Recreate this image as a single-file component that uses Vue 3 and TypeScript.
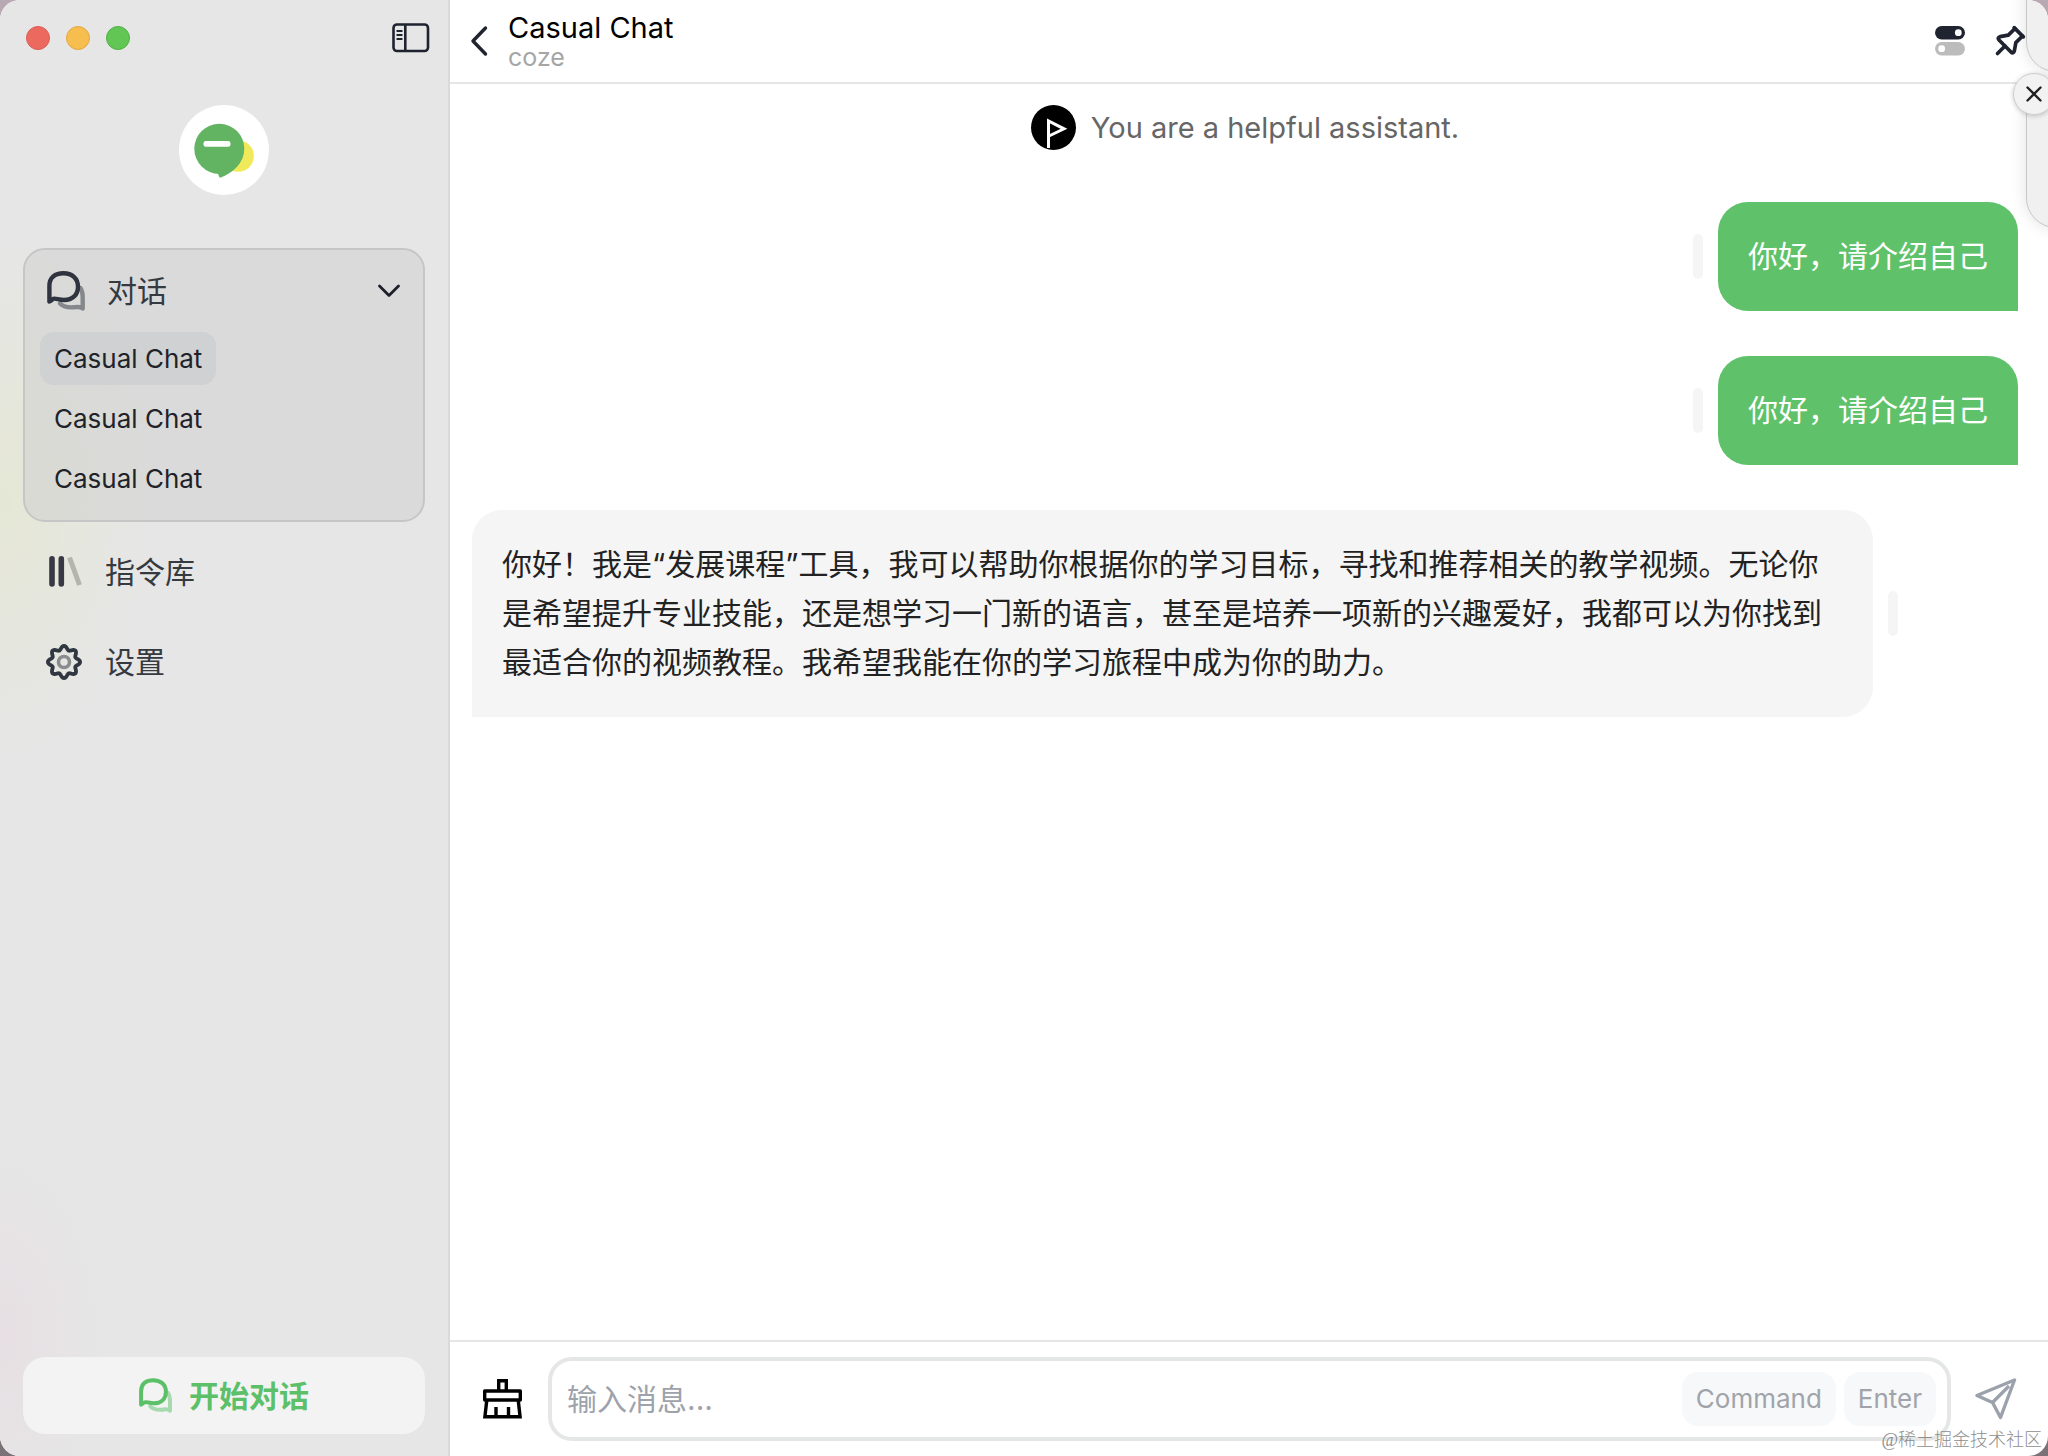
<script setup lang="ts">
import { ref } from 'vue'

interface Message {
  id: number
  from: 'user' | 'bot'
  text: string
}

const chats = ref<string[]>(['Casual Chat', 'Casual Chat', 'Casual Chat'])
const activeChat = ref<number>(0)
const draft = ref<string>('')

const messages: Message[] = [
  { id: 1, from: 'user', text: '你好，请介绍自己' },
  { id: 2, from: 'user', text: '你好，请介绍自己' },
  {
    id: 3,
    from: 'bot',
    text: '你好！我是“发展课程”工具，我可以帮助你根据你的学习目标，寻找和推荐相关的教学视频。无论你是希望提升专业技能，还是想学习一门新的语言，甚至是培养一项新的兴趣爱好，我都可以为你找到最适合你的视频教程。我希望我能在你的学习旅程中成为你的助力。',
  },
]

// Outline of the settings gear: a circle with eight soft lobes
const gearPoints: string = Array.from({ length: 144 }, (_, i) => {
  const a = (i / 144) * Math.PI * 2
  const r = 14.2 + 1.9 * Math.cos(8 * a)
  return `${(19 + r * Math.sin(a)).toFixed(2)},${(19 - r * Math.cos(a)).toFixed(2)}`
}).join(' ')
</script>

<template>
  <div class="desktop">
    <div class="window">
      <aside class="sidebar">
        <div class="titlebar">
          <div class="lights">
            <button class="light red" aria-label="Close"></button>
            <button class="light yellow" aria-label="Minimize"></button>
            <button class="light green" aria-label="Zoom"></button>
          </div>
          <button class="plain" aria-label="Toggle sidebar">
            <svg width="38" height="30" viewBox="0 0 38 30" fill="none" stroke="#1f2330" stroke-width="2.6">
              <rect x="1.5" y="1.5" width="34.5" height="26.5" rx="3.5" />
              <path d="M13.3 1.5V28" />
              <path d="M5.2 8h4.6M5.2 12h4.6M5.2 16h4.6" stroke-width="1.8" stroke-linecap="round" />
            </svg>
          </button>
        </div>

        <div class="logo">
          <svg width="90" height="90" viewBox="0 0 90 90">
            <circle cx="59" cy="51" r="15.8" fill="#f0ea5a" />
            <circle cx="40.3" cy="43.8" r="25" fill="#62b462" />
            <path d="M36 68C39 68.3 39.5 69 39.8 71Q40.3 73.5 43 72C52 68 61 62 64 50L45 48Z" fill="#62b462" />
            <rect x="24.5" y="36" width="27" height="5.8" rx="2.4" fill="#fff" />
          </svg>
        </div>

        <nav class="nav">
          <section class="group">
            <button class="group-head">
              <svg width="38" height="40" viewBox="0 0 38 40" fill="none" stroke="#303440" stroke-width="4.4" stroke-linejoin="round" stroke-linecap="round">
                <path d="M33.4 17C35.4 20 35.7 23 35.7 27V37.5C33 35 30 36 27 36.3C21 36.8 16 35.5 13 32.5" opacity=".5" />
                <path d="M2.4 30.5V15C2.4 6.5 8 2.3 16.5 2.3S31 7.5 31 15.7S25.5 29 17 29C12 29 8.5 27 6.5 27.8C4.5 28.6 4 30 2.4 30.5Z" />
              </svg>
              <span class="nav-text">对话</span>
              <svg class="chevron" width="24" height="16" viewBox="0 0 24 16" fill="none" stroke="#1c2029" stroke-width="2.8" stroke-linecap="round" stroke-linejoin="round">
                <path d="M2.5 3L12 12.5L21.5 3" />
              </svg>
            </button>
            <ul class="chats">
              <li v-for="(name, i) in chats" :key="i">
                <button class="chat" :class="{ active: i === activeChat }" @click="activeChat = i">{{ name }}</button>
              </li>
            </ul>
          </section>
          <button class="nav-item">
            <svg width="38" height="38" viewBox="0 0 38 38" fill="none" stroke-linecap="round" stroke-width="5.6">
              <path d="M7 5.8V31M16.3 5.8V31" stroke="#393946" />
              <path d="M24.5 4.500L34.500 32" stroke="#b3b5ae" stroke-width="5" stroke-linecap="butt" />
            </svg>
            <span class="nav-text">指令库</span>
          </button>
          <button class="nav-item">
            <svg width="38" height="38" viewBox="0 0 38 38" fill="none">
              <polygon :points="gearPoints" stroke="#303741" stroke-width="3.8" stroke-linejoin="round" />
              <circle cx="19" cy="19" r="5.5" stroke="#8b8c8f" stroke-width="3.6" />
            </svg>
            <span class="nav-text">设置</span>
          </button>
        </nav>

        <button class="start">
          <svg width="33" height="35" viewBox="0 0 38 40" fill="none" stroke="#5cc069" stroke-width="4.6" stroke-linejoin="round" stroke-linecap="round">
            <path d="M33.4 17C35.4 20 35.7 23 35.7 27V37.5C33 35 30 36 27 36.3C21 36.8 16 35.5 13 32.5" opacity=".5" />
            <path d="M2.4 30.5V15C2.4 6.5 8 2.3 16.5 2.3S31 7.5 31 15.7S25.5 29 17 29C12 29 8.5 27 6.5 27.8C4.5 28.6 4 30 2.4 30.5Z" />
          </svg>
          <span>开始对话</span>
        </button>
      </aside>

      <main class="main">
        <header class="header">
          <button class="plain" aria-label="Back">
            <svg width="20" height="32" viewBox="0 0 20 32" fill="none" stroke="#20242f" stroke-width="3.4" stroke-linecap="round" stroke-linejoin="round">
              <path d="M16.5 3L4 16L16.5 29" />
            </svg>
          </button>
          <div class="heading">
            <h1>Casual Chat</h1>
            <p>coze</p>
          </div>
          <div class="actions">
            <button class="plain" aria-label="Options">
              <svg width="30" height="30" viewBox="0 0 30 30">
                <rect width="30" height="13.4" rx="6.7" fill="#1f2430" />
                <circle cx="23.3" cy="6.7" r="3.4" fill="#fff" />
                <rect y="16" width="30" height="13.4" rx="6.7" fill="#bcbcbc" />
                <circle cx="6.7" cy="22.7" r="3.4" fill="#fff" />
              </svg>
            </button>
            <button class="plain" aria-label="Pin">
              <svg width="40" height="40" viewBox="0 0 24 24" fill="none" stroke="#1f2430" stroke-width="2.2" stroke-linecap="round" stroke-linejoin="round">
                <path d="M15 4.5L11 8.5L6 9.4Q4.2 10 5.4 11.4L12.6 18.6Q14 19.8 14.6 18L15.5 13L19.5 9" />
                <path d="M9 15L4.5 19.5M14.5 4L20 9.5" />
              </svg>
            </button>
          </div>
        </header>

        <section class="conversation">
          <div class="system">
            <svg width="45" height="45" viewBox="0 0 45 45">
              <circle cx="22.5" cy="22.5" r="22.5" fill="#000" />
              <path d="M17.5 43V16L33 23.8L18 31" fill="none" stroke="#fff" stroke-width="3" />
            </svg>
            <span>You are a helpful assistant.</span>
          </div>
          <div v-for="m in messages" :key="m.id" class="row" :class="m.from">
            <p class="bubble">{{ m.text }}</p>
            <span class="handle"></span>
          </div>
        </section>

        <footer class="composer">
          <button class="plain" aria-label="Clear context">
            <svg width="39" height="40" viewBox="0 0 39 40" fill="none" stroke="#000" stroke-width="3.4">
              <path d="M15.7 12V1.7H23.3V12" />
              <path d="M1.7 12H37.3V21H1.7Z" stroke-linejoin="round" />
              <path d="M3.8 21L1.9 37.8H37.1L35.2 21" />
              <path d="M13 28V37M25.5 28V37" />
            </svg>
          </button>
          <div class="field">
            <input v-model="draft" type="text" placeholder="输入消息..." aria-label="输入消息" />
            <kbd>Command</kbd>
            <kbd>Enter</kbd>
          </div>
          <button class="plain" aria-label="Send">
            <svg width="42" height="42" viewBox="0 0 42 42" fill="none" stroke="#9ca2ab" stroke-width="3.4" stroke-linejoin="round">
              <path d="M39.5 2L2 17.5L17.5 24.5L25.5 39.5Z" />
              <path d="M17.5 24.5L34 8" />
            </svg>
          </button>
        </footer>
      </main>

      <div class="notice first"></div>
      <div class="notice second"></div>
      <button class="dismiss" aria-label="Dismiss">
        <svg width="16" height="16" viewBox="0 0 16 16" stroke="#222" stroke-width="2.4" stroke-linecap="round">
          <path d="M1.5 1.5L14.5 14.5M14.5 1.5L1.5 14.5" />
        </svg>
      </button>
      <span class="credit">@稀土掘金技术社区</span>
    </div>
  </div>
</template>

<style>
body {
  margin: 0;
}
</style>

<style scoped>
.desktop {
  background: linear-gradient(#b8a9b3, #7b7277 90%);
  font-family: Inter, 'Noto Sans CJK SC', sans-serif;
}
.window {
  position: relative;
  display: flex;
  min-height: 100vh;
  border-radius: 20px;
  overflow: hidden;
  background: #fff;
}
button {
  margin: 0;
  padding: 0;
  border: 0;
  background: none;
  font: inherit;
  color: inherit;
  text-align: left;
  cursor: pointer;
}
svg {
  display: block;
  flex: none;
}
.plain {
  flex: none;
}

/* Sidebar */
.sidebar {
  box-sizing: border-box;
  flex: 0 0 450px;
  display: flex;
  flex-direction: column;
  padding: 0 23px 22px;
  border-right: 2px solid #dadada;
  background:
    radial-gradient(ellipse 150px 260px at 0 500px, #e5e7d5, rgba(229, 231, 213, 0)),
    radial-gradient(ellipse 100px 180px at 0 calc(100% - 120px), #e7dfe3, rgba(231, 223, 227, 0)),
    #e6e6e6;
}
.titlebar {
  display: flex;
  align-items: center;
  justify-content: space-between;
  height: 76px;
  padding-left: 3px;
  margin-right: -5px;
}
.lights {
  display: flex;
  gap: 16px;
}
.light {
  box-sizing: border-box;
  width: 24px;
  height: 24px;
  border-radius: 50%;
}
.red {
  background: #ec695f;
  border: 1px solid #dd5c53;
}
.yellow {
  background: #f5be4f;
  border: 1px solid #e3a844;
}
.green {
  background: #61c654;
  border: 1px solid #52b145;
}
.logo {
  align-self: center;
  margin: 29px 0 53px;
  border-radius: 50%;
  background: #fff;
}
.nav {
  flex: 1;
  display: flex;
  flex-direction: column;
  color: #353a41;
}
.group {
  border: 2px solid #c5c6c5;
  border-radius: 22px;
  padding: 15px;
  background: rgba(205, 205, 205, 0.48);
  margin-bottom: 5px;
}
.group-head {
  display: flex;
  align-items: center;
  width: 100%;
  height: 52px;
  margin-bottom: 15px;
  padding: 0 7px;
  box-sizing: border-box;
}
.nav-text {
  font-size: 30px;
  line-height: 44px;
  margin-left: 22px;
}
.chevron {
  margin-left: auto;
}
.chats {
  list-style: none;
  margin: 0;
  padding: 0;
  display: flex;
  flex-direction: column;
  align-items: flex-start;
  gap: 7px;
}
.chat {
  display: block;
  padding: 0 14px;
  border-radius: 14px;
  font-size: 26px;
  line-height: 53px;
  color: #1f2329;
}
.chat.active {
  background: #cfd1d2;
}
.nav-item {
  display: flex;
  align-items: center;
  height: 90px;
  padding-left: 22px;
}
.start {
  display: flex;
  align-items: center;
  justify-content: center;
  gap: 17px;
  height: 77px;
  border-radius: 22px;
  background: #f3f3f3;
  color: #5cc069;
  font-size: 30px;
  line-height: 44px;
  font-weight: 700;
}

/* Conversation */
.main {
  flex: 1;
  min-width: 0;
  display: flex;
  flex-direction: column;
}
.header {
  display: flex;
  align-items: center;
  height: 82px;
  padding: 0 18px 0 19px;
  border-bottom: 2px solid #e5e5e5;
}
.heading {
  flex: 1;
  margin-left: 19px;
}
h1 {
  margin: 0;
  font-size: 29px;
  line-height: 32px;
  font-weight: 400;
  color: #000;
}
.heading p {
  margin: 0;
  font-size: 25px;
  line-height: 26px;
  color: #a6a6a6;
}
.actions {
  display: flex;
  align-items: center;
  gap: 25px;
}
.conversation {
  flex: 1;
  display: flex;
  flex-direction: column;
  gap: 45px;
  padding: 21px 30px 21px 22px;
}
.system {
  display: flex;
  align-items: center;
  justify-content: center;
  gap: 15px;
  margin-bottom: 7px;
  font-size: 29px;
  color: #666;
}
.row {
  display: flex;
  align-items: center;
  gap: 15px;
}
.row.user {
  flex-direction: row-reverse;
}
.row.bot {
  padding-right: 120px;
}
.bubble {
  margin: 0;
  padding: 30px;
  font-size: 30px;
  line-height: 49px;
}
.user .bubble {
  border-radius: 30px 30px 0 30px;
  background: #5fc26a;
  color: #fff;
}
.bot .bubble {
  flex: 1;
  border-radius: 30px 30px 30px 0;
  background: #f5f5f5;
  color: #222;
}
.handle {
  flex: none;
  width: 10px;
  height: 45px;
  border-radius: 5px;
  background: #f5f5f5;
}
.composer {
  display: flex;
  align-items: center;
  padding: 15px 31px 15px 33px;
  border-top: 2px solid #e5e5e5;
}
.field {
  flex: 1;
  min-width: 0;
  display: flex;
  align-items: center;
  gap: 8px;
  box-sizing: border-box;
  height: 84px;
  margin: 0 24px 0 26px;
  padding: 0 11px 0 15px;
  border: 4px solid #e5e7e7;
  border-radius: 24px;
}
.field input {
  flex: 1;
  min-width: 0;
  height: 60px;
  padding: 0;
  border: 0;
  outline: 0;
  background: none;
  font: inherit;
  font-size: 30px;
  color: #222;
}
.field input::placeholder {
  color: #9da2ab;
  opacity: 1;
}
kbd {
  padding: 0 14px;
  border-radius: 16px;
  background: #f7f8f9;
  font-family: inherit;
  font-size: 26px;
  line-height: 54px;
  color: #a0a4aa;
}

/* Floating notices that hang over the right edge */
.notice {
  position: absolute;
  right: -60px;
  width: 80px;
  border: 1px solid #c8c8c8;
  border-radius: 30px;
  background: #f0f0f0;
  box-shadow: 0 0 16px rgba(0, 0, 0, 0.12);
}
.first {
  top: -60px;
  height: 130px;
}
.second {
  top: 80px;
  height: 146px;
}
.dismiss {
  position: absolute;
  top: 73px;
  right: -7px;
  display: flex;
  align-items: center;
  justify-content: center;
  box-sizing: border-box;
  width: 42px;
  height: 42px;
  border: 1px solid #cfcfcf;
  border-radius: 50%;
  background: #f2f2f2;
  box-shadow: 0 1px 5px rgba(0, 0, 0, 0.2);
}
.credit {
  position: absolute;
  right: 6px;
  bottom: 3px;
  font-family: 'Liberation Serif', 'Noto Sans CJK SC', serif;
  font-size: 18px;
  font-weight: 300;
  line-height: 26px;
  color: #8e8e8e;
}
</style>
